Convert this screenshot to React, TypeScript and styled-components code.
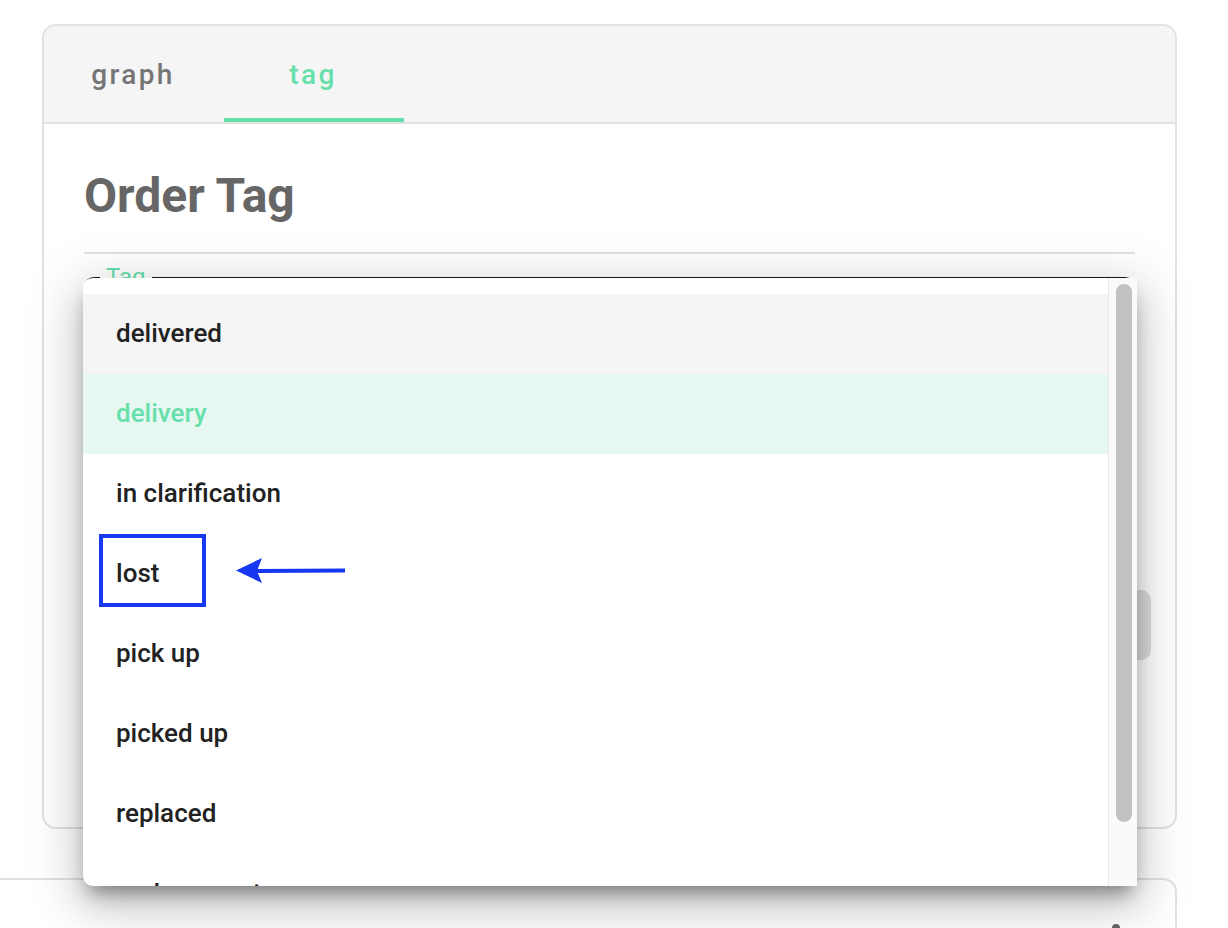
import React from "react";
import styled, { createGlobalStyle } from "styled-components";

const GREEN = "#66dfab";
const BLUE = "#1638f0";

const Global = createGlobalStyle`
  html, body { margin: 0; padding: 0; background: #fff; }
  body { font-family: Roboto, "Liberation Sans", Arial, sans-serif; }
  * { box-sizing: border-box; }
`;

const Page = styled.div`
  position: relative;
  width: 1228px;
  height: 928px;
  overflow: hidden;
  padding: 24px 0 0 42px;
`;

const Card = styled.div`
  width: 1135px;
  height: 805px;
  border: 2px solid #e2e2e2;
  border-radius: 14px;
  overflow: hidden;
  display: flex;
  flex-direction: column;
  background: #fff;
`;

const TabBar = styled.div`
  height: 98px;
  flex: none;
  display: flex;
  background: #f5f5f5;
  border-bottom: 2px solid #e2e2e2;
`;

const Tab = styled.div<{ $active?: boolean }>`
  width: 180px;
  display: flex;
  align-items: center;
  justify-content: center;
  padding-top: 0px;
  padding-right: 2px;
  font-size: 28px;
  font-weight: 500;
  letter-spacing: 2.4px;
  color: ${(p) => (p.$active ? GREEN : "#757575")};
  box-shadow: ${(p) => (p.$active ? `inset 0 -4px 0 ${GREEN}` : "none")};
`;

const Body = styled.div`
  flex: 1;
  padding: 44px 40px 0 40px;
  display: flex;
  flex-direction: column;
`;

const Heading = styled.h1`
  margin: 0;
  font-size: 48px;
  line-height: 56px;
  font-weight: 700;
  color: #666;
`;

const Divider = styled.div`
  height: 2px;
  background: #e2e2e2;
  margin-top: 28px;
`;

const Field = styled.div<{ $focused?: boolean; $top: number }>`
  position: relative;
  height: 112px;
  margin-top: ${(p) => p.$top}px;
  border-radius: 10px;
  border: 2px solid ${(p) => (p.$focused ? GREEN : "#555")};
  border-top-color: ${(p) => (p.$focused ? "#1a1a1a" : "#555")};
`;

const FieldLabel = styled.span`
  position: absolute;
  left: 14px;
  top: -16px;
  padding: 0 6px;
  background: #fff;
  font-size: 24px;
  line-height: 28px;
  color: ${GREEN};
`;

const ButtonRow = styled.div`
  display: flex;
  justify-content: flex-end;
  margin-top: 58px;
  margin-right: -16px;
`;

const GhostButton = styled.div`
  width: 220px;
  height: 70px;
  border-radius: 10px;
  background: #dedede;
`;

const Card2 = styled.div`
  margin-top: 49px;
  margin-left: -80px;
  width: 1215px;
  height: 140px;
  border: 2px solid #e2e2e2;
  border-radius: 14px;
  display: flex;
  justify-content: flex-end;
  padding: 44px 55px 0 0;
`;

const Menu = styled.div`
  position: absolute;
  left: 83px;
  top: 278px;
  width: 1054px;
  height: 608px;
  background: #fff;
  border-radius: 10px 0 0 10px;
  display: flex;
  box-shadow: 0 12px 18px -6px rgba(0, 0, 0, 0.38),
    0 20px 40px 2px rgba(0, 0, 0, 0.16), 0 8px 56px 10px rgba(0, 0, 0, 0.1);
`;

const MenuList = styled.ul`
  flex: 1;
  margin: 0;
  padding: 16px 0 0 0;
  list-style: none;
  overflow: hidden;
  border-radius: 10px 0 0 10px;
`;

const MenuItem = styled.li<{ $state?: "hover" | "selected" }>`
  height: 80px;
  display: flex;
  align-items: center;
  padding: 0 0 2px 33px;
  font-size: 26px;
  font-weight: 500;
  color: ${(p) => (p.$state === "selected" ? GREEN : "#222")};
  background: ${(p) =>
    p.$state === "hover"
      ? "#f5f5f5"
      : p.$state === "selected"
      ? "#e6f8f1"
      : "transparent"};
`;

const Track = styled.div`
  width: 29px;
  flex: none;
  background: #fafafa;
  border-left: 1px solid #e8e8e8;
  padding: 6px 5px 0 7px;
`;

const Thumb = styled.div`
  height: 538px;
  border-radius: 8px;
  background: #c1c1c1;
`;

const Overlay = styled.svg`
  position: absolute;
  left: 0;
  top: 0;
  pointer-events: none;
`;

const items: { label: string; state?: "hover" | "selected" }[] = [
  { label: "delivered", state: "hover" },
  { label: "delivery", state: "selected" },
  { label: "in clarification" },
  { label: "lost" },
  { label: "pick up" },
  { label: "picked up" },
  { label: "replaced" },
  { label: "replacement" },
];

export default function App() {
  return (
    <Page>
      <Global />
      <Card>
        <TabBar>
          <Tab>graph</Tab>
          <Tab $active>tag</Tab>
        </TabBar>
        <Body>
          <Heading>Order Tag</Heading>
          <Divider />
          <Field $focused $top={23}>
            <FieldLabel>Tag</FieldLabel>
          </Field>
          <Field $top={31} />
          <ButtonRow>
            <GhostButton />
          </ButtonRow>
        </Body>
      </Card>
      <Card2>
        <svg width="8" height="40" viewBox="0 0 8 40">
          <circle cx="4" cy="4" r="4" fill="#666" />
          <circle cx="4" cy="18" r="4" fill="#666" />
          <circle cx="4" cy="32" r="4" fill="#666" />
        </svg>
      </Card2>

      <Menu>
        <MenuList>
          {items.map((it) => (
            <MenuItem key={it.label} $state={it.state}>
              {it.label}
            </MenuItem>
          ))}
        </MenuList>
        <Track>
          <Thumb />
        </Track>
      </Menu>

      <Overlay width="1228" height="928" viewBox="0 0 1228 928">
        <rect x="101" y="536" width="103" height="69" fill="none" stroke={BLUE} strokeWidth="4" />
        <line x1="256" y1="571" x2="345" y2="570.5" stroke={BLUE} strokeWidth="4" />
        <polygon points="236,570.5 262,558 257,571 262,583" fill={BLUE} />
      </Overlay>
    </Page>
  );
}
